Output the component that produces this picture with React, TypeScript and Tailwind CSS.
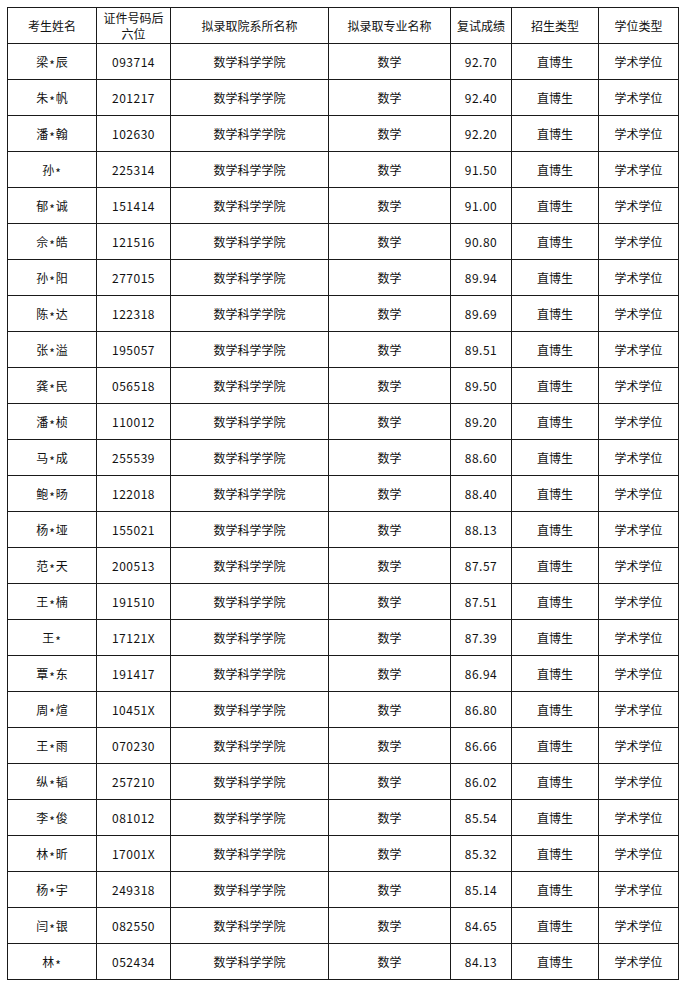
const rows: [string, string, string][] = [
  ['梁*辰', '093714', '92.70'],
  ['朱*帆', '201217', '92.40'],
  ['潘*翰', '102630', '92.20'],
  ['孙*', '225314', '91.50'],
  ['郁*诚', '151414', '91.00'],
  ['佘*皓', '121516', '90.80'],
  ['孙*阳', '277015', '89.94'],
  ['陈*达', '122318', '89.69'],
  ['张*溢', '195057', '89.51'],
  ['龚*民', '056518', '89.50'],
  ['潘*桢', '110012', '89.20'],
  ['马*成', '255539', '88.60'],
  ['鲍*旸', '122018', '88.40'],
  ['杨*垭', '155021', '88.13'],
  ['范*天', '200513', '87.57'],
  ['王*楠', '191510', '87.51'],
  ['王*', '17121X', '87.39'],
  ['覃*东', '191417', '86.94'],
  ['周*煊', '10451X', '86.80'],
  ['王*雨', '070230', '86.66'],
  ['纵*韬', '257210', '86.02'],
  ['李*俊', '081012', '85.54'],
  ['林*昕', '17001X', '85.32'],
  ['杨*宇', '249318', '85.14'],
  ['闫*银', '082550', '84.65'],
  ['林*', '052434', '84.13'],
];

const font = { fontFamily: '"Noto Sans CJK SC", sans-serif' };

// the source font sets the asterisk at mid-height, so nudge it down
function Name({ value }: { value: string }) {
  const [first, rest] = value.split('*');
  return (
    <>
      {first}
      <span className="relative top-[3px] px-[1px]">*</span>
      {rest}
    </>
  );
}

export default function App() {
  const cell = 'border border-[#1a1a1a] text-center align-middle p-0';
  return (
    <div className="bg-white w-[687px] h-[989px] pt-[7px] pl-[7px]" style={font}>
      <table className="table-fixed border-collapse w-[671px] text-[12px] text-[#111]">
        <colgroup>
          <col className="w-[89px]" />
          <col className="w-[74px]" />
          <col className="w-[158px]" />
          <col className="w-[122px]" />
          <col className="w-[61px]" />
          <col className="w-[87px]" />
          <col className="w-[80px]" />
        </colgroup>
        <thead>
          <tr className="h-[36px]">
            <th className={`${cell} font-normal`}>考生姓名</th>
            <th className={`${cell} font-normal leading-[16px] px-[6px]`}>证件号码后六位</th>
            <th className={`${cell} font-normal`}>拟录取院系所名称</th>
            <th className={`${cell} font-normal`}>拟录取专业名称</th>
            <th className={`${cell} font-normal`}>复试成绩</th>
            <th className={`${cell} font-normal`}>招生类型</th>
            <th className={`${cell} font-normal`}>学位类型</th>
          </tr>
        </thead>
        <tbody>
          {rows.map(([name, id, score]) => (
            <tr key={id} className="h-[36px]">
              <td className={cell}>
                <Name value={name} />
              </td>
              <td className={`${cell} tracking-[0.5px]`}>{id}</td>
              <td className={cell}>数学科学学院</td>
              <td className={cell}>数学</td>
              <td className={`${cell} tracking-[0.5px]`}>{score}</td>
              <td className={cell}>直博生</td>
              <td className={cell}>学术学位</td>
            </tr>
          ))}
        </tbody>
      </table>
    </div>
  );
}
